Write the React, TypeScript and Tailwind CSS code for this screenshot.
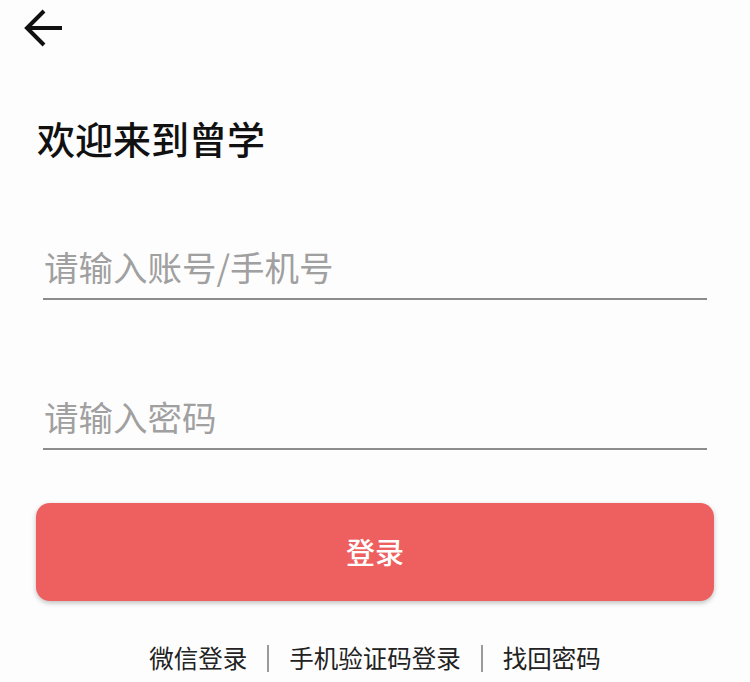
import React from "react";

export default function App() {
  return (
    <div
      className="w-[750px] h-[682px] bg-[#fdfdfd] overflow-hidden flex flex-col"
      style={{ fontFamily: '"Noto Sans CJK SC", "Noto Sans", sans-serif' }}
    >
      <div className="pl-[24px] pt-[8px] h-[50px]">
        <svg width="40" height="40" viewBox="0 0 40 40" fill="none">
          <path d="M38 20H3M20 3L3 20L20 37" stroke="#111" strokeWidth="4" strokeLinejoin="miter" />
        </svg>
      </div>
      <div className="pl-[37px] mt-[60px] h-[56px] flex items-center">
        <h1 className="text-[38px] leading-none font-medium text-[#111]">欢迎来到曾学</h1>
      </div>
      <div className="mx-[43px] w-[664px] mt-[64px] h-[70px] border-b-2 border-[#8c8c8c] flex items-end pb-[7px]">
        <input
          className="w-full outline-none bg-transparent text-[34.5px] leading-none pl-[1px] placeholder:text-[#a0a0a0]"
          placeholder="请输入账号/手机号"
        />
      </div>
      <div className="mx-[43px] w-[664px] mt-[80px] h-[70px] border-b-2 border-[#8c8c8c] flex items-end pb-[7px]">
        <input
          type="password"
          className="w-full outline-none bg-transparent text-[34.5px] leading-none pl-[1px] placeholder:text-[#a0a0a0]"
          placeholder="请输入密码"
        />
      </div>
      <button className="ml-[36px] w-[678px] mt-[53px] h-[98px] rounded-[14px] bg-[#ee5f60] text-white text-[29px] font-medium shadow-[0_2px_5px_rgba(0,0,0,0.25)] flex items-center justify-center">
        登录
      </button>
      <div className="mt-[44px] flex items-center justify-center text-[24.5px] leading-none text-[#222]">
        <span>微信登录</span>
        <span className="mx-[20px] w-[2px] h-[27px] bg-[#9a9a9a]" />
        <span>手机验证码登录</span>
        <span className="mx-[20px] w-[2px] h-[27px] bg-[#9a9a9a]" />
        <span>找回密码</span>
      </div>
    </div>
  );
}
